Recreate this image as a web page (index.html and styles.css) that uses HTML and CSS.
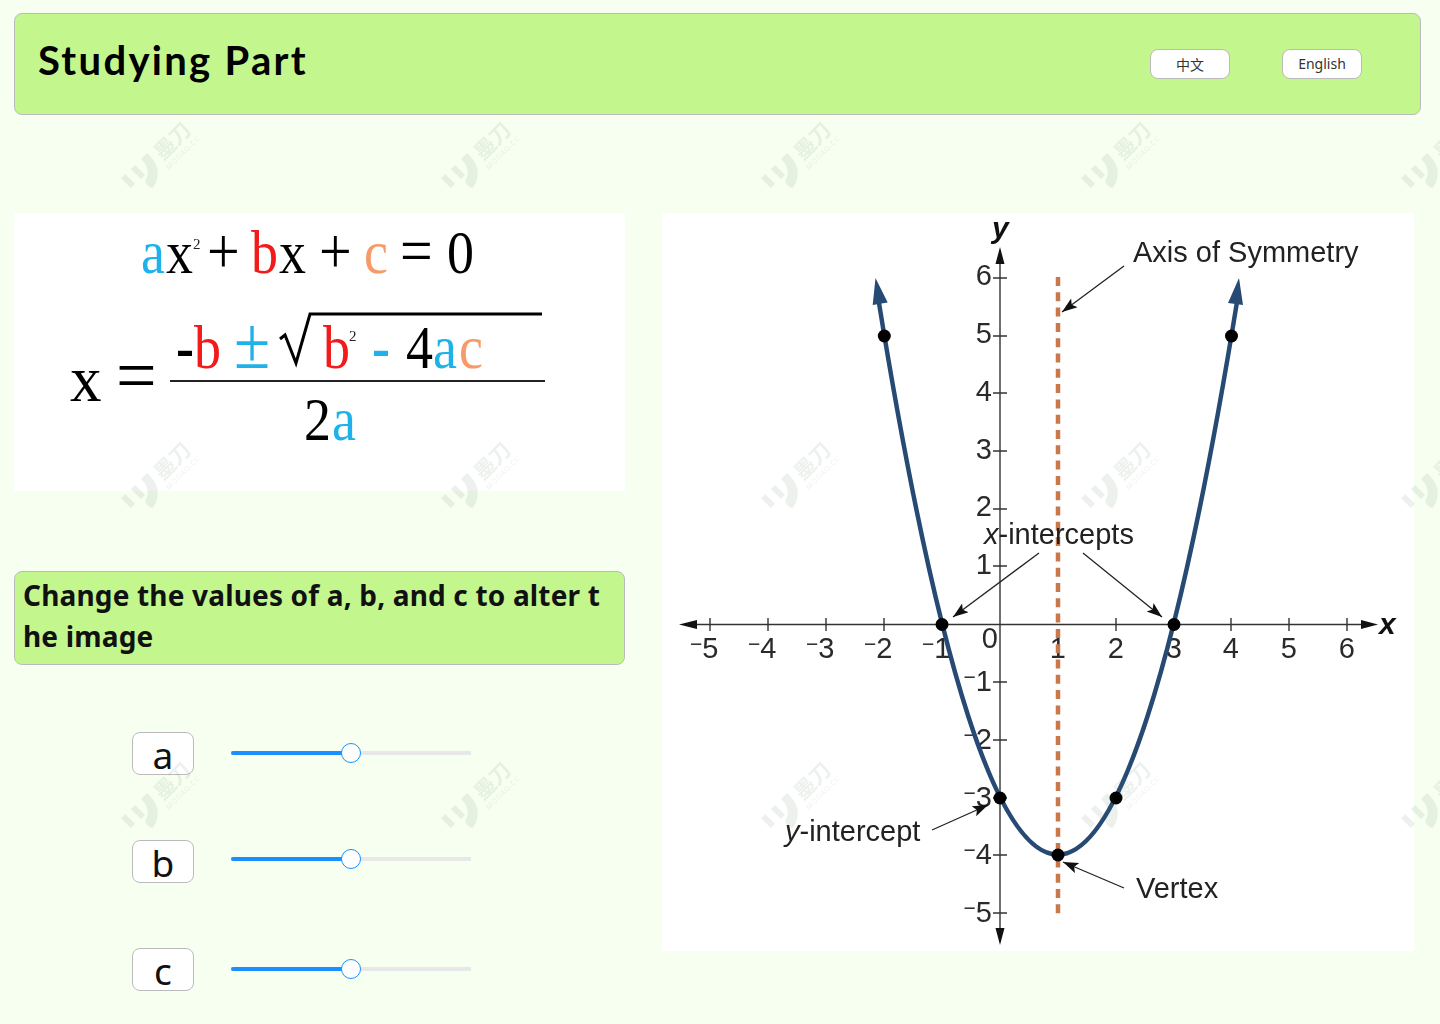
FILE: index.html
```html
<!DOCTYPE html>
<html lang="en">
<head>
  <meta charset="UTF-8" />
  <title>Studying Part</title>
  <link rel="stylesheet" href="styles.css">
</head>
<body>
  <header class="topbar">
    <h1 class="title">Studying Part</h1>
    <button class="lang-btn lang-zh">中文</button>
    <button class="lang-btn">English</button>
  </header>

  <main class="content">
    <section class="left-col">
      <div class="formula">
        <svg class="formula-svg" viewBox="14 213 611 278" width="611" height="278">
          <text class="fx" transform="translate(0 273) scale(1 1.12)">
            <tspan class="blue" x="141">a</tspan><tspan x="166">x</tspan><tspan class="op" x="207">+</tspan>
            <tspan class="red" x="251">b</tspan><tspan x="279">x</tspan><tspan class="op" x="319">+</tspan>
            <tspan class="orange" x="364">c</tspan><tspan class="op" x="400">=</tspan><tspan x="447">0</tspan>
          </text>
          <text class="fx-sup" x="193" y="249">2</text>

          <text class="fx" transform="translate(0 368) scale(1 1.12)">
            <tspan class="bold" x="176">-</tspan><tspan class="red" x="194">b</tspan>
            <tspan class="blue op-lg" x="234">±</tspan>
            <tspan class="red" x="323">b</tspan>
            <tspan class="blue bold" x="372">-</tspan>
            <tspan x="406">4</tspan><tspan class="blue" x="433">a</tspan><tspan class="orange" x="459">c</tspan>
          </text>
          <text class="fx-sup" x="349" y="341">2</text>
          <path class="radical" d="M280 339 L285 335 L296 363 L310 314 L542 314" />

          <text class="fx" transform="translate(0 401) scale(1 1.05)"><tspan class="x-big" x="70">x</tspan><tspan class="eq-lg" x="116">=</tspan></text>
          <rect x="170" y="380" width="375" height="2" fill="#222" />
          <text class="fx" transform="translate(0 440) scale(1 1.12)"><tspan x="304">2</tspan><tspan class="blue" x="332">a</tspan></text>
        </svg>
      </div>

      <div class="hint">Change the values of a, b, and c to alter the image</div>

      <div class="controls">
        <div class="ctrl-row">
          <span class="var-label">a</span>
          <input class="slider" type="range" min="0" max="100" value="50" />
        </div>
        <div class="ctrl-row ctrl-b">
          <span class="var-label">b</span>
          <input class="slider" type="range" min="0" max="100" value="50" />
        </div>
        <div class="ctrl-row">
          <span class="var-label">c</span>
          <input class="slider" type="range" min="0" max="100" value="50" />
        </div>
      </div>
    </section>

    <section class="graph">
      <svg class="graph-svg" viewBox="662 213 752 738" width="752" height="738">
        <defs>
          <marker id="tip" viewBox="0 0 14 10" refX="14" refY="5" markerWidth="18" markerHeight="11" markerUnits="userSpaceOnUse" orient="auto">
            <path d="M0 0 L14 5 L0 10 L3 5 Z" fill="#111" />
          </marker>
        </defs>

        <!-- axes -->
        <g class="axis">
          <path d="M690 624.5 H1368 M1000 255 V935" />
          <path d="M710 618 V631 M768 618 V631 M826 618 V631 M884 618 V631 M942 618 V631 M1116 618 V631 M1174 618 V631 M1231 618 V631 M1289 618 V631 M1347 618 V631" />
          <path d="M993 278 H1007 M993 336 H1007 M993 393 H1007 M993 451 H1007 M993 509 H1007 M993 566 H1007 M993 682 H1007 M993 740 H1007 M993 798 H1007 M993 855 H1007 M993 913 H1007" />
        </g>
        <path d="M679 624.5 L697 620 L697 629 Z M1378 624.5 L1361 620 L1361 629 Z M1000 247 L995.5 264 L1004.5 264 Z M1000 945 L995.5 928 L1004.5 928 Z" fill="#111" />

        <text class="axis-name" x="992" y="238">y</text>
        <text class="axis-name" x="1379" y="634">x</text>

        <!-- x axis numbers -->
        <g class="num">
          <text x="718.5" y="658"><tspan class="minus" dy="-7">−</tspan><tspan dy="7">5</tspan></text>
          <text x="776.5" y="658"><tspan class="minus" dy="-7">−</tspan><tspan dy="7">4</tspan></text>
          <text x="834.5" y="658"><tspan class="minus" dy="-7">−</tspan><tspan dy="7">3</tspan></text>
          <text x="892.5" y="658"><tspan class="minus" dy="-7">−</tspan><tspan dy="7">2</tspan></text>
          <text x="950.5" y="658"><tspan class="minus" dy="-7">−</tspan><tspan dy="7">1</tspan></text>
          <text x="998" y="648">0</text>
          <text x="1066" y="658">1</text>
          <text x="1124" y="658">2</text>
          <text x="1182" y="658">3</text>
          <text x="1239" y="658">4</text>
          <text x="1297" y="658">5</text>
          <text x="1355" y="658">6</text>
        </g>
        <!-- y axis numbers -->
        <g class="num">
          <text x="992" y="285">6</text>
          <text x="992" y="343">5</text>
          <text x="992" y="401">4</text>
          <text x="992" y="459">3</text>
          <text x="992" y="516">2</text>
          <text x="992" y="574">1</text>
          <text x="992" y="691"><tspan class="minus" dy="-7">−</tspan><tspan dy="7">1</tspan></text>
          <text x="992" y="749"><tspan class="minus" dy="-7">−</tspan><tspan dy="7">2</tspan></text>
          <text x="992" y="807"><tspan class="minus" dy="-7">−</tspan><tspan dy="7">3</tspan></text>
          <text x="992" y="864"><tspan class="minus" dy="-7">−</tspan><tspan dy="7">4</tspan></text>
          <text x="992" y="922"><tspan class="minus" dy="-7">−</tspan><tspan dy="7">5</tspan></text>
        </g>

        <!-- parabola -->
        <path class="curve" d="M878.5 300 Q1057.9 1409.3 1237.3 300" />
        <path d="M875.5 278 L872.7 305 L887.7 302.5 Z M1239 278 L1228 303 L1243 305 Z" fill="#264a73" />
        <line class="sym" x1="1058" y1="277" x2="1058" y2="915" />

        <g fill="#000">
          <circle cx="884.3" cy="336" r="6.5" />
          <circle cx="942" cy="624.5" r="6.5" />
          <circle cx="1000" cy="798" r="6.5" />
          <circle cx="1058" cy="855" r="6.5" />
          <circle cx="1116" cy="798" r="6.5" />
          <circle cx="1174" cy="624.5" r="6.5" />
          <circle cx="1231.5" cy="336" r="6.5" />
        </g>

        <!-- call-outs -->
        <g class="callout">
          <line x1="1124" y1="266" x2="1062" y2="312" marker-end="url(#tip)" />
          <line x1="1039" y1="553" x2="953" y2="617" marker-end="url(#tip)" />
          <line x1="1083" y1="553" x2="1162" y2="617" marker-end="url(#tip)" />
          <line x1="932" y1="830" x2="988" y2="805" marker-end="url(#tip)" />
          <line x1="1124" y1="888" x2="1063" y2="862" marker-end="url(#tip)" />
        </g>
        <g class="note">
          <text x="1133" y="262">Axis of Symmetry</text>
          <text x="984" y="544"><tspan class="it">x</tspan>-intercepts</text>
          <text x="785" y="841"><tspan class="it">y</tspan>-intercept</text>
          <text x="1136" y="898">Vertex</text>
        </g>
      </svg>
    </section>
  </main>

  <!-- watermark tiled over the page -->
  <svg class="watermark" width="1440" height="1024">
    <defs>
      <pattern id="wm" x="120" y="120" width="320" height="320" patternUnits="userSpaceOnUse">
        <rect x="-7" y="-3" width="14" height="6" transform="translate(8 61) rotate(45)" />
        <rect x="-7" y="-3" width="14" height="6" transform="translate(18 52) rotate(45)" />
        <path d="M21 39 L27 33 Q45 49 33 68 Q27 67 25 61 Q32 50 21 39 Z" />
        <text class="wm-cn" transform="translate(43 41) rotate(-45)">墨刀</text>
        <text class="wm-en" transform="translate(49 50) rotate(-45)">MODAO.CC</text>
      </pattern>
    </defs>
    <rect width="1440" height="1024" fill="url(#wm)" />
  </svg>
</body>
</html>
```

FILE: styles.css
```css
body { margin: 0; padding: 13px 19px 0 14px; height: 1011px; overflow: hidden; background-color: #f6fff0; font-family: "Noto Sans", "Noto Sans CJK SC", sans-serif; color: #111; }

.topbar { display: flex; align-items: center; height: 100px; padding-right: 58px; background: #c3f78e; border: 1px solid #bbb; border-radius: 8px; }
.title { margin: 0 auto 8px 23px; font-family: Lato, sans-serif; font-size: 40px; font-weight: 700; letter-spacing: 2.3px; color: #000; }
.lang-btn { width: 80px; height: 30px; margin-top: -1px; padding: 0; background: #fff; border: 1px solid #bbb; border-radius: 8px; font-family: "Noto Sans", "Noto Sans CJK SC", sans-serif; font-size: 14px; color: #333; }
.lang-zh { margin-right: 52px; }

.content { display: grid; grid-template-columns: 611px 752px; column-gap: 37px; margin-top: 98px; }

.formula { height: 278px; background: #fff; }
.formula-svg { display: block; filter: blur(0.5px); }
.fx { font-family: "Liberation Serif", serif; font-size: 54px; fill: #000; }
.fx-sup { font-family: "Liberation Serif", serif; font-size: 15px; fill: #222; }
.op { font-size: 58px; }
.op-lg { font-size: 66px; }
.eq-lg { font-size: 72px; }
.x-big { font-size: 63px; }
.blue { fill: #1fb2ea; }
.red { fill: #f21a1a; }
.orange { fill: #f79a68; }
.bold { font-weight: 700; }
.radical { fill: none; stroke: #000; stroke-width: 3; }

.hint { box-sizing: border-box; height: 94px; margin-top: 80px; padding: 3px 18px 3px 8px; background: #c3f78e; border: 1px solid #bbb; border-radius: 8px; font-size: 28px; font-weight: 700; letter-spacing: 0.17px; line-height: 41px; word-break: break-all; }

.controls { display: flex; flex-direction: column; gap: 65px; margin-top: 67px; padding-left: 118px; }
.ctrl-row { display: flex; align-items: center; gap: 37px; }
.ctrl-row .slider { margin-bottom: 2px; }
.ctrl-b .slider { margin-bottom: 5px; }
.var-label { box-sizing: border-box; width: 62px; height: 43px; background: #fff; border: 1px solid #bbb; border-radius: 8px; font-size: 37px; line-height: 43px; text-align: center; }

.slider { width: 240px; height: 20px; margin: 0; -webkit-appearance: none; appearance: none; background: linear-gradient(#e8e8e8, #e8e8e8) center / 100% 4px no-repeat; border-radius: 2px; }
.slider::-webkit-slider-runnable-track { height: 4px; border-radius: 2px; background: linear-gradient(to right, #1890ff 50%, #e8e8e8 50%); }
.slider::-webkit-slider-thumb { -webkit-appearance: none; box-sizing: border-box; width: 20px; height: 20px; margin-top: -8px; background: #fff; border: 1px solid #1890ff; border-radius: 50%; }

.graph { height: 738px; background: #fff; }
.graph-svg { display: block; overflow: visible; filter: blur(0.5px); }
.axis { fill: none; stroke: #333; stroke-width: 1.4; }
.axis-name { font-family: "Liberation Sans", sans-serif; font-size: 30px; font-weight: 700; font-style: italic; fill: #111; }
.num text { font-family: "Liberation Sans", sans-serif; font-size: 29px; fill: #2a2a2a; text-anchor: end; }
.minus { font-size: 21px; }
.curve { fill: none; stroke: #264a73; stroke-width: 4.5; }
.sym { stroke: #c9784c; stroke-width: 4.5; stroke-dasharray: 9 6.3; }
.callout line { stroke: #222; stroke-width: 1.3; }
.note text { font-family: "Liberation Sans", sans-serif; font-size: 29px; fill: #222; }
.it { font-style: italic; }

.watermark { position: absolute; top: 0; left: 0; pointer-events: none; }
.watermark pattern { fill: #54734e; fill-opacity: 0.1; }
.wm-cn { font-family: "Noto Sans CJK SC", sans-serif; font-size: 21px; font-weight: 700; }
.wm-en { font-family: "Noto Sans", sans-serif; font-size: 7px; letter-spacing: 1px; }
```
